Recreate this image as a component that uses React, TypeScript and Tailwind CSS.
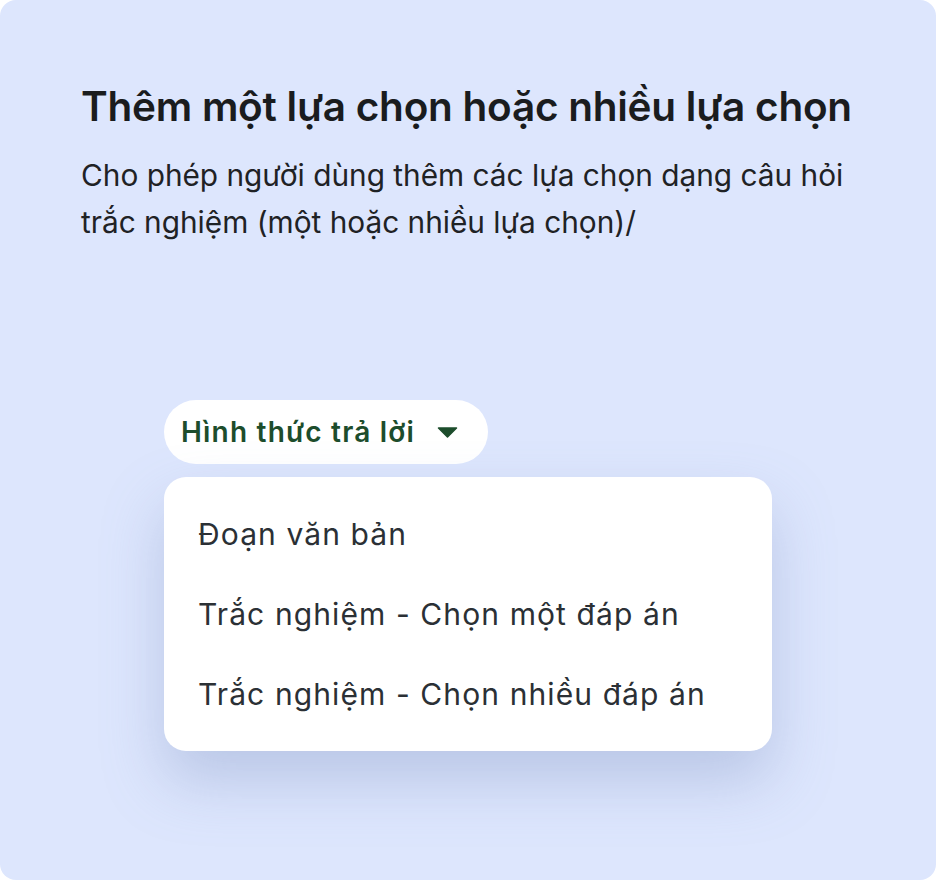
import React from 'react';

const options = ['Đoạn văn bản', 'Trắc nghiệm - Chọn một đáp án', 'Trắc nghiệm - Chọn nhiều đáp án'];

export default function App() {
  return (
    <div className="w-[936px] h-[880px] bg-white" style={{ fontFamily: 'Inter, "Noto Sans", sans-serif' }}>
      <div className="w-full h-full rounded-[16px] bg-[#dde6fd] pt-[83px] pl-[81px] pr-[40px]">
        {/* tiêu đề */}
        <h1 className="text-[40.5px] leading-[48px] font-semibold text-[#1a1c1e] tracking-[-0.25px] whitespace-nowrap">
          Thêm một lựa chọn hoặc nhiều lựa chọn
        </h1>
        <p className="mt-[21px] text-[29.8px] leading-[47px] text-[#1f2225] max-w-[790px]">
          Cho phép người dùng thêm các lựa chọn dạng câu hỏi trắc nghiệm (một hoặc nhiều lựa chọn)/
        </p>

        {/* dropdown */}
        <div className="mt-[154px] ml-[83px] flex flex-col items-start">
          <div className="h-[64px] w-[324px] rounded-full bg-white flex items-center pl-[17px] gap-[22px]">
            <span className="text-[28px] font-semibold tracking-[1.2px] text-[#1d4d2c]">Hình thức trả lời</span>
            <svg width="21" height="11" viewBox="0 0 21 11">
              <path d="M1.5 1 H19.5 L10.5 10 Z" fill="#1d4d2c" stroke="#1d4d2c" strokeWidth="1.5" strokeLinejoin="round" />
            </svg>
          </div>
          <div className="mt-[13px] w-[608px] h-[274px] rounded-[22px] bg-white shadow-[0_30px_60px_rgba(120,140,190,0.35)] pt-[34px] pl-[34px] flex flex-col gap-[33px]">
            {options.map(o => (
              <div key={o} className="text-[30px] leading-[47px] tracking-[1.1px] text-[#2b3035]">{o}</div>
            ))}
          </div>
        </div>
      </div>
    </div>
  );
}
